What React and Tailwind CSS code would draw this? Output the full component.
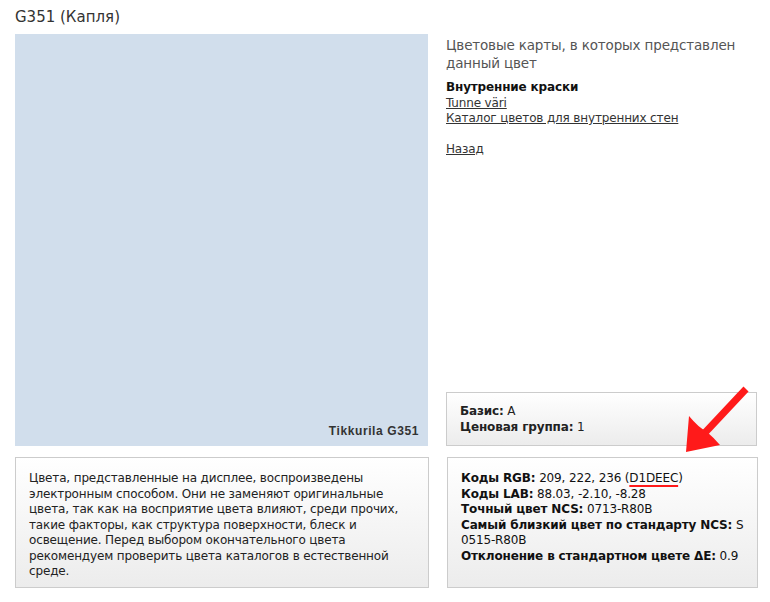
import React from 'react';

const Box = ({ className = '', children }) => (
    <div className={`border border-[#cccccc] bg-gradient-to-b from-white to-[#ececec] ${className}`}>
        {children}
    </div>
);

const Arrow = () => (
    <svg className="absolute left-[680px] top-[380px] pointer-events-none" width="80" height="80" viewBox="680 380 80 80">
        <line x1="746" y1="389" x2="700" y2="438" stroke="#ff1a1a" strokeWidth="7" strokeLinecap="butt" />
        <path d="M686 452 L689 416 Q699 428 706 431 Q713 437 720 445 Z" fill="#ff1a1a" />
    </svg>
);

export default function App() {
    return (
        <div className="relative w-[770px] h-[602px] bg-white text-[#222] font-['DejaVu_Sans',Verdana,sans-serif] text-[12px] leading-[15.5px] tracking-[-0.15px]">
            <h1 className="pl-[15px] pt-[7px] h-[34px] text-[15px] leading-[20px] tracking-normal text-[#333]">G351 (Капля)</h1>
            <div className="flex pl-[15px] gap-[18px]">
                <div className="w-[413px] h-[412px] bg-[#D1DEEC] flex items-end justify-end px-[9px] py-[7px]">
                    <span className="font-['Liberation_Sans',Arial,sans-serif] font-bold text-[12px] tracking-[0.6px] text-[#333]">Tikkurila G351</span>
                </div>
                <div className="w-[311px] flex flex-col">
                    <h2 className="pt-[2px] text-[13.5px] leading-[18px] text-[#555]">Цветовые карты, в которых представлен данный цвет</h2>
                    <div className="mt-[8px] flex flex-col text-[#333]">
                        <b className="text-[#111]">Внутренние краски</b>
                        <a href="#" className="underline self-start">Tunne väri</a>
                        <a href="#" className="underline self-start">Каталог цветов для внутренних стен</a>
                        <a href="#" className="underline self-start mt-[15px]">Назад</a>
                    </div>
                    <Box className="mt-auto h-[54px] px-[13px] pt-[11px]">
                        <div><b>Базис:</b> A</div>
                        <div><b>Ценовая группа:</b> 1</div>
                    </Box>
                </div>
            </div>
            <div className="flex pl-[15px] gap-[18px] mt-[11px]">
                <Box className="w-[414px] h-[131px] px-[13px] pt-[13px] text-[#222]">
                    Цвета, представленные на дисплее, воспроизведены электронным способом. Они не заменяют оригинальные цвета, так как на восприятие цвета влияют, среди прочих, такие факторы, как структура поверхности, блеск и освещение. Перед выбором окончательного цвета рекомендуем проверить цвета каталогов в естественной среде.
                </Box>
                <Box className="w-[311px] h-[131px] pl-[13px] pr-[8px] pt-[13px] text-[#111]">
                    <div><b>Коды RGB:</b> 209, 222, 236 (<span className="underline decoration-[#ff1a1a] decoration-2 underline-offset-[3px]">D1DEEC</span>)</div>
                    <div><b>Коды LAB:</b> 88.03, -2.10, -8.28</div>
                    <div><b>Точный цвет NCS:</b> 0713-R80B</div>
                    <div><b>Самый близкий цвет по стандарту NCS:</b> S 0515-R80B</div>
                    <div><b>Отклонение в стандартном цвете ΔE:</b> 0.9</div>
                </Box>
            </div>
            <Arrow />
        </div>
    );
}
